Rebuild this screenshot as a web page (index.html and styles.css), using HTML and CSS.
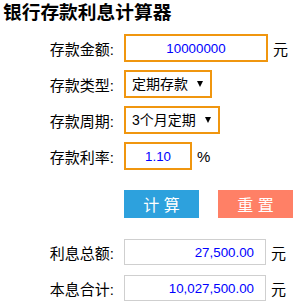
FILE: index.html
```html
<!DOCTYPE html>
<html lang="zh-CN">
<head>
    <meta charset="UTF-8">
    <meta name="viewport" content="width=device-width, initial-scale=1.0">
    <title>银行存款利息计算器</title>
    <link rel="stylesheet" href="styles.css">
</head>
<body>
    <h1 class="title">银行存款利息计算器</h1>

    <div class="calc">
        <div class="row">
            <label class="label" for="amount">存款金额:</label>
            <input class="field" id="amount" type="text" value="10000000">
            <span class="unit">元</span>
        </div>

        <div class="row">
            <label class="label" for="depositType">存款类型:</label>
            <span class="select-wrap">
                <select class="select" id="depositType">
                    <option>定期存款</option>
                    <option>活期存款</option>
                </select>
            </span>
        </div>

        <div class="row">
            <label class="label" for="period">存款周期:</label>
            <span class="select-wrap">
                <select class="select" id="period">
                    <option>3个月定期</option>
                    <option>6个月定期</option>
                    <option>1年定期</option>
                    <option>2年定期</option>
                </select>
            </span>
        </div>

        <div class="row">
            <label class="label" for="rate">存款利率:</label>
            <input class="field rate" id="rate" type="text" value="1.10">
            <span class="unit">%</span>
        </div>

        <div class="actions">
            <button class="btn btn-calc" id="calcBtn">计 算</button>
            <button class="btn btn-reset" id="resetBtn">重 置</button>
        </div>

        <div class="row result-row">
            <label class="label" for="interest">利息总额:</label>
            <input class="result" id="interest" type="text" value="27,500.00" readonly>
            <span class="unit">元</span>
        </div>

        <div class="row result-row">
            <label class="label" for="total">本息合计:</label>
            <input class="result" id="total" type="text" value="10,027,500.00" readonly>
            <span class="unit">元</span>
        </div>
    </div>

    <script>
        // Simple interest calculation
        const amountInput = document.getElementById('amount');
        const rateInput = document.getElementById('rate');
        const periodSelect = document.getElementById('period');
        const months = [3, 6, 12, 24];

        function money(value) {
            return value.toLocaleString('en-US', { minimumFractionDigits: 2, maximumFractionDigits: 2 });
        }

        document.getElementById('calcBtn').addEventListener('click', function() {
            const amount = parseFloat(amountInput.value) || 0;
            const rate = parseFloat(rateInput.value) || 0;
            const m = months[periodSelect.selectedIndex];
            const interest = amount * rate / 100 * m / 12;
            document.getElementById('interest').value = money(interest);
            document.getElementById('total').value = money(amount + interest);
        });

        document.getElementById('resetBtn').addEventListener('click', function() {
            amountInput.value = '';
            rateInput.value = '';
            document.getElementById('interest').value = '';
            document.getElementById('total').value = '';
        });
    </script>
</body>
</html>
```

FILE: styles.css
```css
* {
    box-sizing: border-box;
}

body {
    margin: 0;
    font-family: "Liberation Sans", "Noto Sans CJK SC", sans-serif;
    color: #000;
    background: #fff;
}

/* Title */
.title {
    margin: 2px 0 0 3px;
    font-size: 18.72px;
    line-height: 22px;
    font-weight: bold;
}

/* Form */
.calc {
    margin-top: 10px;
    display: flex;
    flex-direction: column;
    gap: 8px;
}

.row {
    display: flex;
    align-items: center;
    height: 28px;
}

.label {
    width: 114px;
    margin-right: 10px;
    text-align: right;
    font-size: 15px;
}

.field {
    width: 144px;
    height: 28px;
    border: 2px solid #f0960f;
    padding: 0;
    font-family: "Liberation Sans", "Noto Sans CJK SC", sans-serif;
    font-size: 13.33px;
    color: #0000ff;
    text-align: center;
    outline: none;
}

.field.rate {
    width: 68px;
}

.unit {
    margin-left: 5px;
    font-size: 15px;
}

/* Select with drawn arrow */
.select-wrap {
    position: relative;
    display: inline-block;
}

.select-wrap::after {
    content: "";
    position: absolute;
    right: 9px;
    top: 11px;
    border-left: 3px solid transparent;
    border-right: 3px solid transparent;
    border-top: 6px solid #000;
    pointer-events: none;
}

.select {
    appearance: none;
    -webkit-appearance: none;
    height: 28px;
    border: 2px solid #f0960f;
    border-radius: 0;
    background: #fff;
    padding: 0 22px 0 6px;
    font-family: "Liberation Sans", "Noto Sans CJK SC", sans-serif;
    font-size: 14px;
    color: #000;
    outline: none;
}

/* Buttons */
.actions {
    display: flex;
    gap: 19px;
    margin: 12px 0 13px 124px;
}

.btn {
    width: 75px;
    height: 28px;
    border: none;
    color: #fff;
    font-family: "Liberation Sans", "Noto Sans CJK SC", sans-serif;
    font-size: 16px;
    cursor: pointer;
}

.btn-calc {
    background-color: #2da1dd;
}

.btn-reset {
    background-color: #ff8066;
}

/* Results */
.result-row {
    height: 26px;
    margin-bottom: 2px;
}

.result {
    width: 142px;
    height: 26px;
    border: 1px solid #cfcfcf;
    padding: 0 11px 0 0;
    font-family: "Liberation Sans", "Noto Sans CJK SC", sans-serif;
    font-size: 13.33px;
    color: #0000ff;
    text-align: right;
    outline: none;
}
```
